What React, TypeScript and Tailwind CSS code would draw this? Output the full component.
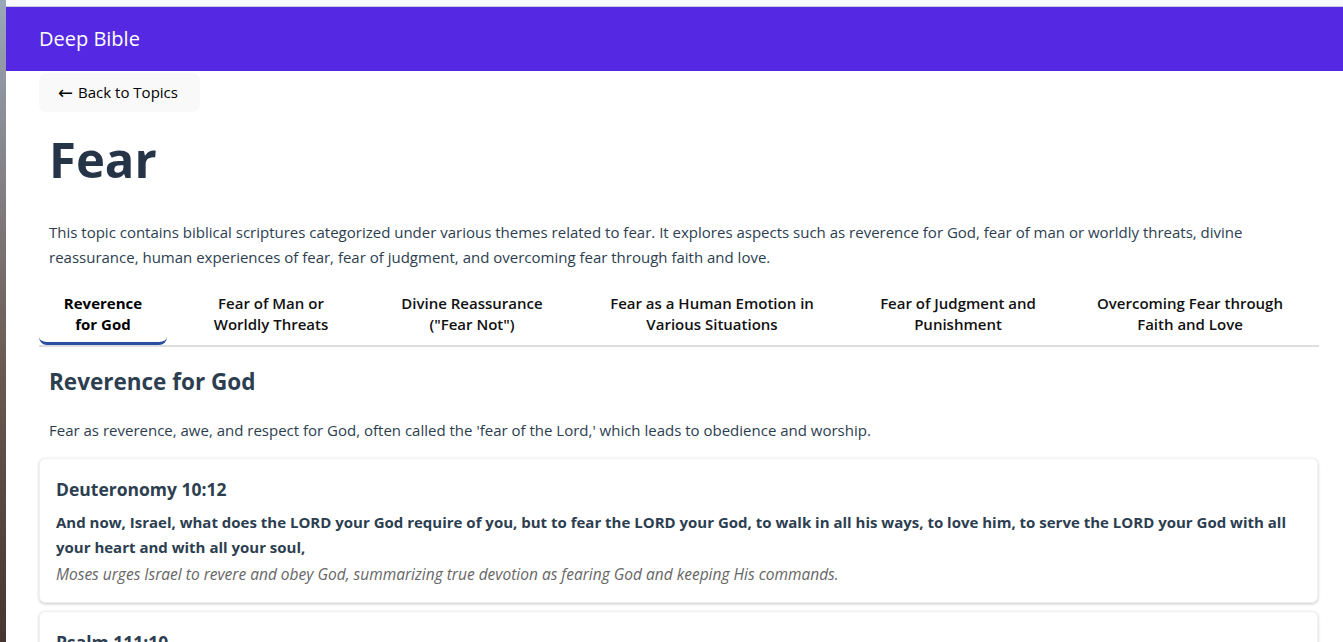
import React, { useState } from "react";

const tabs = [
  { lines: ["Reverence", "for God"], w: "w-[128px]" },
  { lines: ["Fear of Man or", "Worldly Threats"], w: "w-[208px]" },
  { lines: ["Divine Reassurance", "(\"Fear Not\")"], w: "w-[194px]" },
  { lines: ["Fear as a Human Emotion in", "Various Situations"], w: "w-[286px]" },
  { lines: ["Fear of Judgment and", "Punishment"], w: "w-[206px]" },
  { lines: ["Overcoming Fear through", "Faith and Love"], w: "w-[258px]" },
];

const verses = [
  {
    ref: "Deuteronomy 10:12",
    text: "And now, Israel, what does the LORD your God require of you, but to fear the LORD your God, to walk in all his ways, to love him, to serve the LORD your God with all your heart and with all your soul,",
    note: "Moses urges Israel to revere and obey God, summarizing true devotion as fearing God and keeping His commands.",
  },
  {
    ref: "Psalm 111:10",
    text: "The fear of the LORD is the beginning of wisdom; all those who practice it have a good understanding. His praise endures forever!",
    note: "Reverence for God is the foundation of true wisdom.",
  },
];

export default function App() {
  const [active, setActive] = useState(0);
  return (
    <div className="flex min-h-[642px] bg-white font-['Open_Sans','Liberation_Sans',sans-serif] text-[#2c3e50]">
      <div className="w-[6px] shrink-0 bg-gradient-to-b from-[#9aa7ba] via-[#6b5a52] to-[#3b2a26]" />
      <div className="flex min-w-0 flex-1 flex-col">
        <div className="h-[7px] border-b border-[#c9cbd6] bg-[#f7f9fe]" />
        <header className="flex h-[64px] items-center bg-[#5529e3] px-[33px]">
          <span className="text-[20px] text-white">Deep Bible</span>
        </header>
        <main className="w-[1280px] pl-[33px] box-content">
          <button className="mt-[2px] flex h-[39px] w-[161px] items-center gap-[5px] rounded-lg bg-[#f9f9f9] px-[19px] text-[15px] font-medium text-black">
            <span className="font-['DejaVu_Sans'] text-[18px] font-normal leading-none">←</span>
            <span>Back to Topics</span>
          </button>
          <div className="px-[10px]">
            <h1 className="mt-[16px] text-[49px] font-bold leading-[62px] text-[#253446]">Fear</h1>
            <p className="mt-[30px] text-[15px] leading-[25px]">
              This topic contains biblical scriptures categorized under various themes related to fear. It explores aspects such as reverence for God, fear of man or worldly threats, divine reassurance, human experiences of fear, fear of judgment, and overcoming fear through faith and love.
            </p>
          </div>
          <div className="mt-[15px] flex border-b-2 border-[#dddddd]">
            {tabs.map((t, i) => (
              <button
                key={i}
                onClick={() => setActive(i)}
                className={
                  i === active
                    ? `${t.w} rounded-b-lg border-b-[3px] border-[#2a4f9f] pb-[7px] pt-[8px] text-[15px] font-bold leading-[21px] text-black`
                    : `${t.w} pb-[10px] pt-[8px] text-[15px] font-semibold leading-[21px] text-[#111]`
                }
              >
                {t.lines[0]}
                <br />
                {t.lines[1]}
              </button>
            ))}
          </div>
          <div className="px-[10px]">
            <h2 className="mt-[20px] text-[22.5px] font-bold leading-[30px]">Reverence for God</h2>
            <p className="mt-[21px] text-[15px] leading-[25px]">
              Fear as reverence, awe, and respect for God, often called the 'fear of the Lord,' which leads to obedience and worship.
            </p>
          </div>
          <div className="mt-[15px] flex flex-col gap-[8px] pr-px">
            {verses.map((v) => (
              <div
                key={v.ref}
                className="rounded-md border border-[#f1f1f1] bg-white px-[16px] pb-[15px] pt-[17px] shadow-[0_1px_3px_rgba(0,0,0,0.22)]"
              >
                <h3 className="text-[17.5px] font-bold leading-[27px]">{v.ref}</h3>
                <p className="mt-[7px] text-[15px] font-bold leading-[25px]">{v.text}</p>
                <p className="mt-[2px] text-[15.5px] italic leading-[25px] text-[#666666]">{v.note}</p>
              </div>
            ))}
          </div>
        </main>
      </div>
    </div>
  );
}
